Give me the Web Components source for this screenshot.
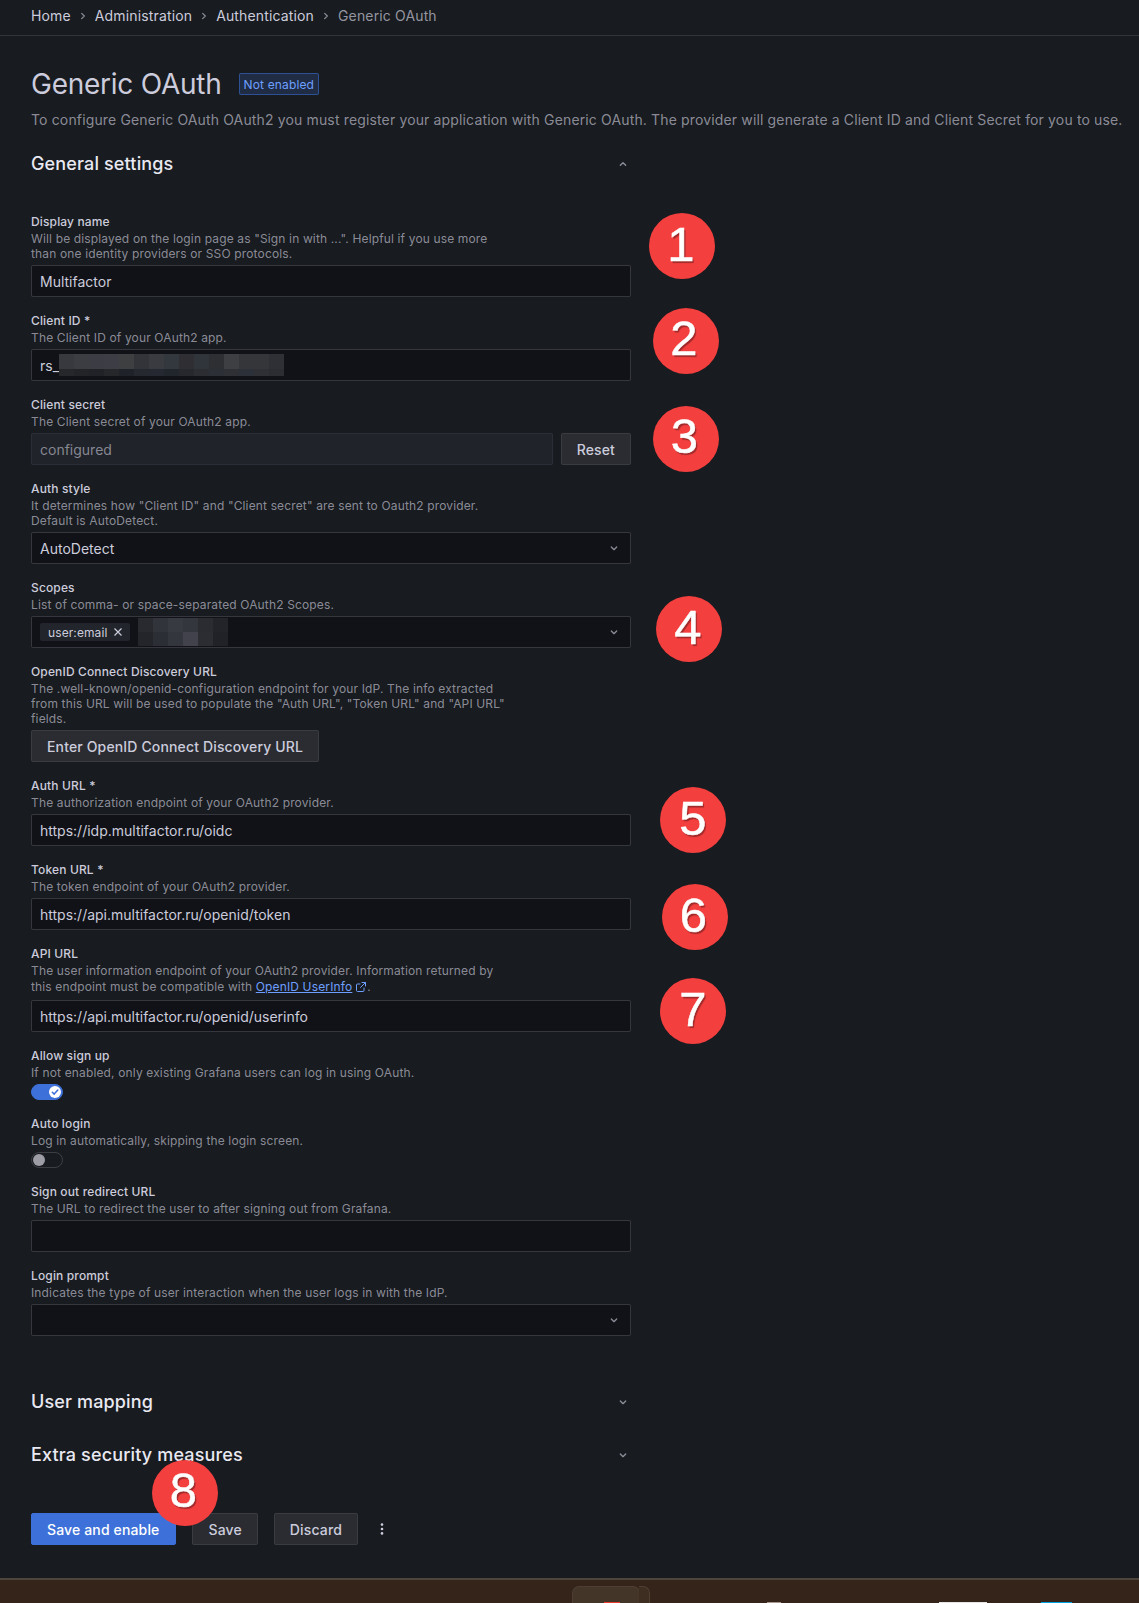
<!DOCTYPE html>
<html lang="en">
<head>
<meta charset="utf-8">
<title>Generic OAuth</title>
<style>
  html, body { margin: 0; padding: 0; background: #181b1f; }
  body { font-family: Inter, "Liberation Sans", sans-serif; color: #ccccdc; font-size: 14px; letter-spacing: .145px; width: 1139px; height: 1603px; overflow: hidden; }
</style>
</head>
<body>
<gf-page>
  <gf-breadcrumbs slot="nav"></gf-breadcrumbs>

  <gf-title slot="head" badge="Not enabled" desc="To configure Generic OAuth OAuth2 you must register your application with Generic OAuth. The provider will generate a Client ID and Client Secret for you to use.">Generic OAuth</gf-title>

  <gf-section title-text="General settings" open>
    <gf-field label="Display name">
      <span slot="desc">Will be displayed on the login page as "Sign in with ...". Helpful if you use more<br>than one identity providers or SSO protocols.</span>
      <gf-input value="Multifactor"></gf-input>
    </gf-field>
    <gf-field label="Client ID *">
      <span slot="desc">The Client ID of your OAuth2 app.</span>
      <gf-input value="rs_"><gf-mosaic slot="extra" mode="client"></gf-mosaic></gf-input>
    </gf-field>
    <gf-field label="Client secret">
      <span slot="desc">The Client secret of your OAuth2 app.</span>
      <gf-row>
        <gf-input value="configured" disabled style="flex:1"></gf-input>
        <gf-button>Reset</gf-button>
      </gf-row>
    </gf-field>
    <gf-field label="Auth style">
      <span slot="desc">It determines how "Client ID" and "Client secret" are sent to Oauth2 provider.<br>Default is AutoDetect.</span>
      <gf-input value="AutoDetect" select></gf-input>
    </gf-field>
    <gf-field label="Scopes">
      <span slot="desc">List of comma- or space-separated OAuth2 Scopes.</span>
      <gf-input select><gf-tag slot="extra">user:email</gf-tag><gf-mosaic slot="extra" mode="scope"></gf-mosaic></gf-input>
    </gf-field>
    <gf-field label="OpenID Connect Discovery URL">
      <span slot="desc">The .well-known/openid-configuration endpoint for your IdP. The info extracted<br>from this URL will be used to populate the "Auth URL", "Token URL" and "API URL"<br>fields.</span>
      <gf-button>Enter OpenID Connect Discovery URL</gf-button>
    </gf-field>
    <gf-field label="Auth URL *">
      <span slot="desc">The authorization endpoint of your OAuth2 provider.</span>
      <gf-input value="https://idp.multifactor.ru/oidc"></gf-input>
    </gf-field>
    <gf-field label="Token URL *">
      <span slot="desc">The token endpoint of your OAuth2 provider.</span>
      <gf-input value="https://api.multifactor.ru/openid/token"></gf-input>
    </gf-field>
    <gf-field label="API URL">
      <span slot="desc">The user information endpoint of your OAuth2 provider. Information returned by<br><span style="display:block;height:18px;line-height:18px">this endpoint must be compatible with <gf-link>OpenID UserInfo</gf-link>.</span></span>
      <gf-input value="https://api.multifactor.ru/openid/userinfo"></gf-input>
    </gf-field>
    <gf-field label="Allow sign up">
      <span slot="desc">If not enabled, only existing Grafana users can log in using OAuth.</span>
      <gf-switch on></gf-switch>
    </gf-field>
    <gf-field label="Auto login">
      <span slot="desc">Log in automatically, skipping the login screen.</span>
      <gf-switch></gf-switch>
    </gf-field>
    <gf-field label="Sign out redirect URL">
      <span slot="desc">The URL to redirect the user to after signing out from Grafana.</span>
      <gf-input></gf-input>
    </gf-field>
    <gf-field label="Login prompt">
      <span slot="desc">Indicates the type of user interaction when the user logs in with the IdP.</span>
      <gf-input select></gf-input>
    </gf-field>
  </gf-section>

  <gf-section title-text="User mapping"></gf-section>
  <gf-section title-text="Extra security measures"></gf-section>

  <gf-actions>
    <gf-button primary>Save and enable</gf-button>
    <gf-button>Save</gf-button>
    <gf-button>Discard</gf-button>
    <gf-kebab></gf-kebab>
  </gf-actions>

  <gf-taskbar slot="bottom"></gf-taskbar>

  <gf-marker slot="over" x="649" y="213" dx="2" dy="3">1</gf-marker>
  <gf-marker slot="over" x="653" y="308" dx="4" dy="6">2</gf-marker>
  <gf-marker slot="over" x="653" y="406" dx="3" dy="5">3</gf-marker>
  <gf-marker slot="over" x="656" y="596" dx="2" dy="3">4</gf-marker>
  <gf-marker slot="over" x="660" y="787" dx="0" dy="3">5</gf-marker>
  <gf-marker slot="over" x="662" y="884" dx="3" dy="3">6</gf-marker>
  <gf-marker slot="over" x="660" y="978" dx="0" dy="3">7</gf-marker>
  <gf-marker slot="over" x="152" y="1460" dx="3" dy="6">8</gf-marker>
</gf-page>

<script>
const CHEV_DOWN = '<svg width="16" height="16" viewBox="0 0 24 24" fill="none" stroke="currentColor" stroke-width="2" stroke-linecap="round" stroke-linejoin="round"><path d="M8 10.5l4 4 4-4"/></svg>';
const CHEV_UP = '<svg width="16" height="16" viewBox="0 0 24 24" fill="none" stroke="currentColor" stroke-width="2" stroke-linecap="round" stroke-linejoin="round"><path d="M8 14l4-4 4 4"/></svg>';
const CHEV_RIGHT = '<svg width="16" height="16" viewBox="0 0 24 24" fill="none" stroke="currentColor" stroke-width="1.8" stroke-linecap="round" stroke-linejoin="round"><path d="M10 8l4 4-4 4"/></svg>';

function define(name, css, html, init) {
  customElements.define(name, class extends HTMLElement {
    connectedCallback() {
      if (this.shadowRoot) return;
      const root = this.attachShadow({ mode: 'open' });
      root.innerHTML = '<style>' + css + '</style>' + (typeof html === 'function' ? html(this) : html);
      if (init) init(this, root);
    }
  });
}

define('gf-page', `
  :host { display: block; position: relative; width: 1139px; height: 1603px; }
  main { padding: 31px 0 0 31px; width: 600px; }
  .bottom { position: absolute; left: 0; right: 0; bottom: 0; }
`, `<slot name="nav"></slot><main><slot name="head"></slot><slot></slot></main><div class="bottom"><slot name="bottom"></slot></div><slot name="over"></slot>`);

define('gf-breadcrumbs', `
  :host { display: flex; align-items: center; padding: 0 0 3px 31px; box-sizing: border-box; height: 36px; border-bottom: 1px solid rgba(204,204,220,.14); font-size: 14px; line-height: 22px; }
  a { color: #ccccdc; }
  b { font-weight: 400; color: rgba(204,204,220,.7); }
  svg { display: block; margin: 0 4px; color: rgba(204,204,220,.65); }
`, `<a>Home</a>${CHEV_RIGHT}<a>Administration</a>${CHEV_RIGHT}<a>Authentication</a>${CHEV_RIGHT}<b>Generic OAuth</b>`);

define('gf-title', `
  :host { display: block; width: 1100px; margin-bottom: 23px; }
  .row { display: flex; align-items: center; gap: 17px; height: 34px; }
  h1 { margin: 0; font-size: 28px; font-weight: 400; line-height: 34px; color: #ccccdc; letter-spacing: -.25px; }
  .badge { display: flex; align-items: center; height: 22px; box-sizing: border-box; padding: 0 4px; font-size: 12px; color: #6e9fff; background: rgba(61,113,217,.2); border: 1px solid rgba(61,113,217,.55); border-radius: 2px; }
  p { margin: 8px 0 0; font-size: 14px; line-height: 21px; color: rgba(204,204,220,.65); white-space: nowrap; }
`, el => `<div class="row"><h1><slot></slot></h1><span class="badge">${el.getAttribute('badge')}</span></div><p>${el.getAttribute('desc')}</p>`);

define('gf-section', `
  :host { display: block; }
  .head { display: flex; justify-content: space-between; align-items: center; height: 22px; margin-bottom: 31px; }
  h2 { margin: 0; font-size: 18px; font-weight: 500; line-height: 22px; color: #e9e9f2; }
  svg { display: block; color: rgba(204,204,220,.65); margin-right: 0; }
  .body { padding: 8px 0 39px; }
`, el => `<div class="head"><h2>${el.getAttribute('title-text')}</h2>${el.hasAttribute('open') ? CHEV_UP : CHEV_DOWN}</div>${el.hasAttribute('open') ? '<div class="body"><slot></slot></div>' : ''}`);

define('gf-field', `
  :host { display: block; margin-bottom: 16px; }
  .label { font-size: 12px; font-weight: 500; line-height: 15px; color: #ccccdc; }
  .desc { margin-top: 2px; margin-bottom: 4px; font-size: 12px; font-weight: 400; line-height: 15px; color: rgba(204,204,220,.65); white-space: nowrap; }
`, el => `<div class="label">${el.getAttribute('label')}</div><div class="desc"><slot name="desc"></slot></div><slot></slot>`);

define('gf-row', `:host { display: flex; gap: 8px; }`, `<slot></slot>`);

define('gf-input', `
  :host { display: flex; align-items: center; height: 32px; box-sizing: border-box; padding: 0 8px; background: #111217; border: 1px solid rgba(204,204,220,.2); border-radius: 2px; font-size: 14px; letter-spacing: normal; color: #ccccdc; position: relative; }
  :host([disabled]) { background: #202329; border-color: rgba(204,204,220,.07); color: rgba(204,204,220,.6); }
  svg { position: absolute; right: 8px; top: 7px; color: rgba(204,204,220,.65); }
  .v:empty { display: none; }
  .extra { display: flex; align-items: center; }
`, el => `<span class="v">${el.getAttribute('value') || ''}</span><span class="extra"><slot name="extra"></slot></span>${el.hasAttribute('select') ? CHEV_DOWN : ''}`);

define('gf-tag', `
  :host { display: flex; align-items: center; justify-content: space-between; width: 90px; height: 18px; box-sizing: border-box; padding: 0 8px; background: #22252b; border-radius: 2px; font-size: 12px; letter-spacing: .1px; color: #ccccdc; }
  svg { display: block; margin-right: -1px; }
`, `<slot></slot><svg width="10" height="10" viewBox="0 0 10 10" fill="none" stroke="currentColor" stroke-width="1.2"><path d="M1.5 1.5l7 7M8.5 1.5l-7 7"/></svg>`);

define('gf-mosaic', `
  :host { display: grid; }
  :host([mode="client"]) { grid-template-columns: repeat(15, 15px); grid-template-rows: 15px 7px; }
  :host([mode="scope"]) { grid-template-columns: repeat(6, 15px); grid-template-rows: 14px 14px; margin-left: 8px; }
  i { display: block; }
`, '', (el, root) => {
  const client = ['#37393f','#3b3d43','#3c3d44','#3d3e45','#3e3f41','#32343a','#393b41','#33383f','#2f2f33','#30343b','#2d2f33','#3e3f43','#35363a','#35363a','#2f3035',
                  '#25272b','#222428','#202227','#26272b','#1f2228','#25282f','#252830','#20262c','#27282d','#2b2d33','#2d2f36','#2e3036','#2c3038','#2e3036','#2c2d33'];
  const scope = ['#282a30','#32343b','#383a42','#34363d','#2a2c32','#22242a',
                 '#23252b','#2c2e35','#34363d','#41424b','#2b2d33','#202227'];
  const colors = el.getAttribute('mode') === 'client' ? client : scope;
  colors.forEach(c => { const i = document.createElement('i'); i.style.background = c; root.appendChild(i); });
});

define('gf-button', `
  :host { display: inline-flex; align-items: center; height: 32px; box-sizing: border-box; padding: 0 15px; background: #2a2c32; border: 1px solid rgba(204,204,220,.1); border-radius: 2px; font-size: 14px; font-weight: 500; color: #ccccdc; vertical-align: top; }
  :host([primary]) { background: #3d71d9; border-color: #3d71d9; color: #fff; padding-right: 16px; }
`, `<slot></slot>`);

define('gf-link', `
  :host { display: inline; color: #6e9fff; }
  u { text-underline-offset: 1px; }
  svg { vertical-align: -2px; margin-left: 3px; }
`, `<u><slot></slot></u><svg width="12" height="12" viewBox="0 0 24 24" fill="none" stroke="#6e9fff" stroke-width="2" stroke-linecap="round" stroke-linejoin="round"><path d="M18 14v5a2 2 0 0 1-2 2H5a2 2 0 0 1-2-2V8a2 2 0 0 1 2-2h5"/><path d="M14 3h7v7M21 3L11 13"/></svg>`);

define('gf-switch', `
  :host { display: block; position: relative; width: 32px; height: 16px; box-sizing: border-box; border-radius: 8px; background: transparent; border: 1px solid rgba(204,204,220,.2); }
  :host([on]) { background: #3d71d9; border-color: #3d71d9; }
  .k { position: absolute; top: 1px; left: 1px; width: 12px; height: 12px; border-radius: 50%; background: #9d9da5; }
  :host([on]) .k { left: 17px; background: #fff; }
  svg { display: block; }
`, el => `<div class="k">${el.hasAttribute('on') ? '<svg width="12" height="12" viewBox="0 0 12 12" fill="none" stroke="#3d71d9" stroke-width="1.5" stroke-linecap="round" stroke-linejoin="round"><path d="M3.3 6.2l1.9 1.9 3.6-4"/></svg>' : ''}</div>`);

define('gf-actions', `:host { display: flex; align-items: center; gap: 16px; padding-top: 16px; }`, `<slot></slot>`);

define('gf-kebab', `
  :host { display: block; width: 16px; height: 16px; color: #ccccdc; }
  svg { display: block; }
`, `<svg width="16" height="16" viewBox="0 0 16 16" fill="currentColor"><circle cx="8" cy="3.6" r="1.3"/><circle cx="8" cy="8" r="1.3"/><circle cx="8" cy="12.4" r="1.3"/></svg>`);

define('gf-taskbar', `
  :host { display: flex; align-items: flex-end; height: 25px; box-sizing: border-box; border-top: 2px solid #4d443b; background: #35241a; overflow: hidden; }
  .tile { position: relative; margin-left: 572px; width: 68px; height: 17px; box-sizing: border-box; background: #443529; border-radius: 7px 7px 0 0; border: 1px solid #4d3f33; border-bottom: 0; }
  .tile::after { content: ""; position: absolute; right: -11px; top: -1px; width: 10px; height: 17px; border-radius: 0 7px 0 0; background: #3e2e22; border: 1px solid #4d3f33; border-left: 0; border-bottom: 0; box-sizing: content-box; }
  .dot { position: absolute; left: 31px; bottom: 0; width: 16px; height: 1px; background: #e83a2e; }
  .a { margin-left: 127px; width: 14px; height: 1px; background: #a89a90; }
  .b { margin-left: 158px; width: 48px; height: 1px; background: #e6e6e6; }
  .c { margin-left: 54px; width: 31px; height: 1px; background: #00a3e0; }
`, `<div class="tile"><div class="dot"></div></div><div class="a"></div><div class="b"></div><div class="c"></div>`);

define('gf-marker', `
  :host { position: absolute; display: flex; align-items: center; justify-content: center; width: 66px; height: 66px; box-sizing: border-box; border-radius: 50%; background: #f43f3f; color: #fff; font-family: "Liberation Sans", Arial, sans-serif; font-size: 49px; letter-spacing: normal; line-height: 1; -webkit-text-stroke: .5px #fff; text-shadow: 1.5px 1.5px 1px rgba(0,0,0,.35); }
`, `<slot></slot>`, el => {
  el.style.left = el.getAttribute('x') + 'px';
  el.style.top = el.getAttribute('y') + 'px';
  el.style.paddingRight = el.getAttribute('dx') + 'px';
  el.style.paddingBottom = el.getAttribute('dy') + 'px';
});
</script>
</body>
</html>
